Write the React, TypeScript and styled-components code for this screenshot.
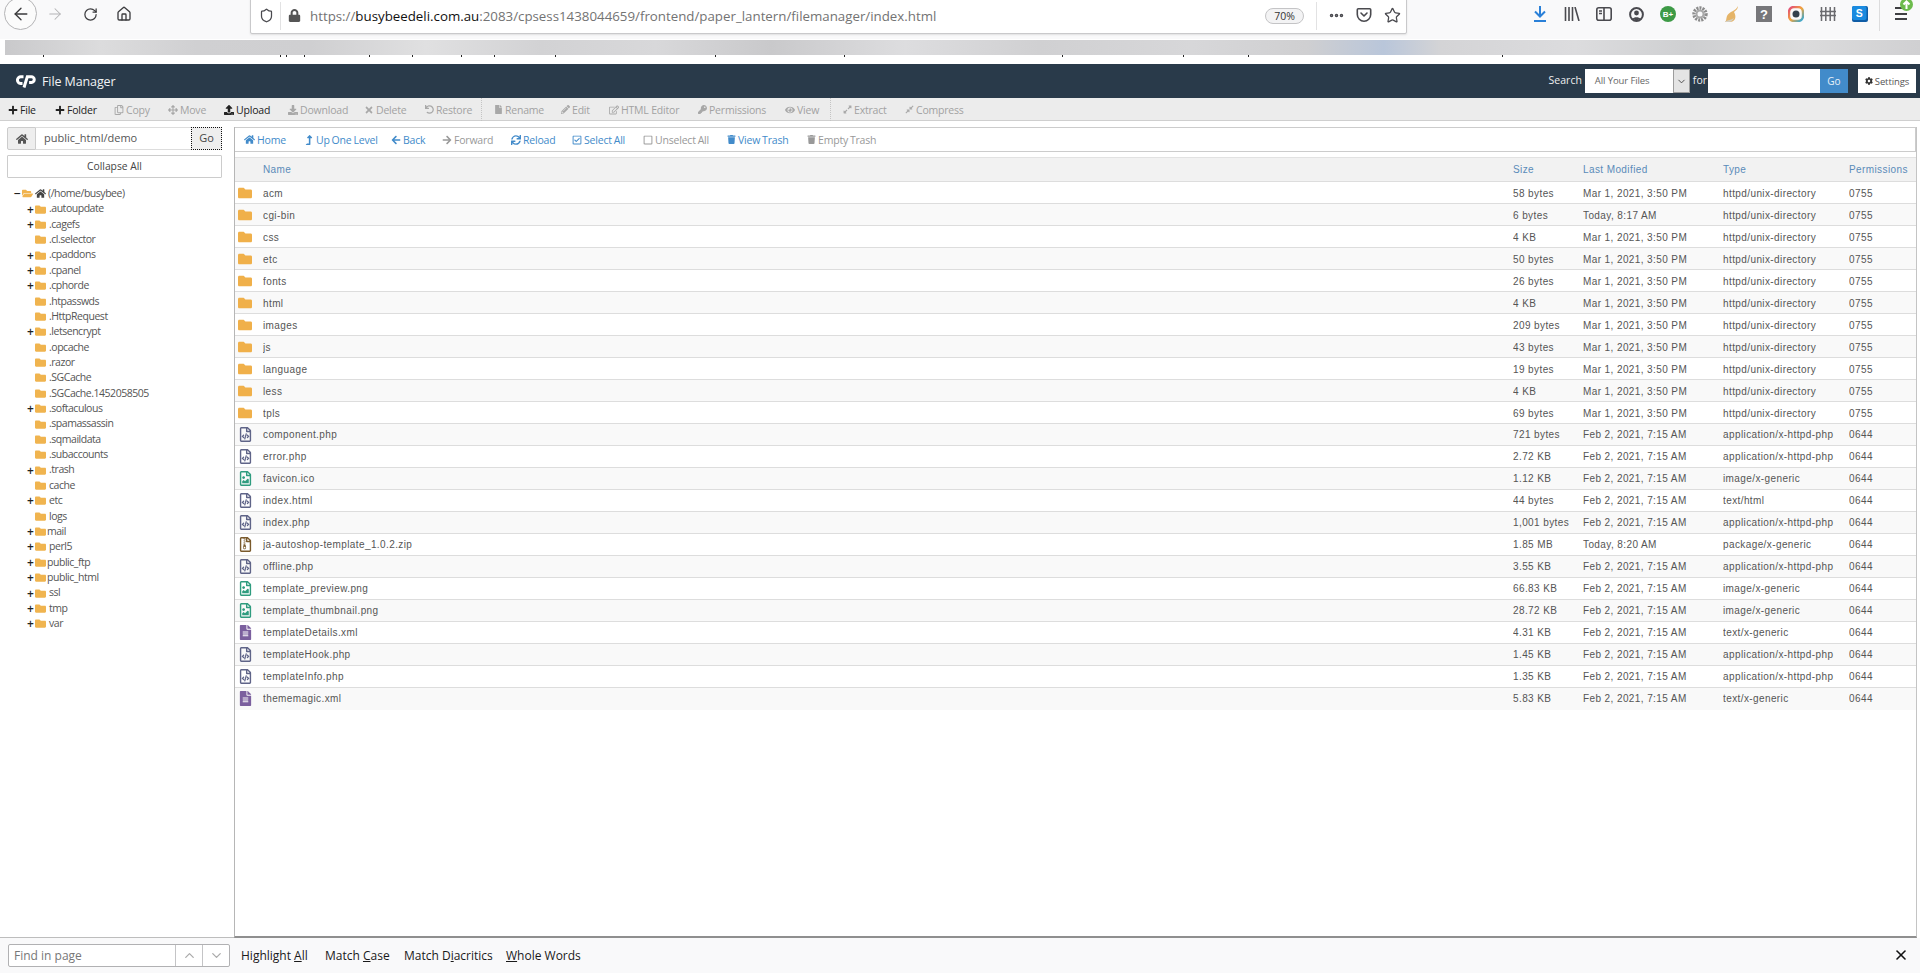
import React from "react";
import styled, { createGlobalStyle } from "styled-components";
import {
  FaPlus, FaRegCopy, FaArrowsAlt, FaUpload, FaDownload, FaTimes, FaUndo, FaFile, FaPencilAlt, FaRegEdit,
  FaKey, FaEye, FaExpandAlt, FaCompressAlt, FaHome, FaLevelUpAlt, FaArrowLeft, FaArrowRight, FaSync,
  FaRegCheckSquare, FaRegSquare, FaTrash, FaCog, FaFolder, FaFolderOpen, FaRegFileCode, FaRegFileImage,
  FaFileAlt, FaRegFileArchive, FaLock,
} from "react-icons/fa";
import { ArrowLeft, ArrowRight, RotateCw, Home, Shield, Star, ChevronUp, ChevronDown, X, Ellipsis } from "lucide-react";

const Global = createGlobalStyle`
  html, body { margin: 0; padding: 0; background: #fff; overflow: hidden; }
  * { box-sizing: border-box; }
`;

const Page = styled.div`
  width: 1920px; height: 973px; display: flex; flex-direction: column; overflow: hidden;
  font-family: "Open Sans", sans-serif; color: #333;
`;

const BrowserBar = styled.div`
  height: 39px; background: #f9f9fa; display: flex; align-items: flex-start; position: relative; flex: none;
`;
const BackCircle = styled.div`
  width: 33px; height: 33px; margin: -3px 0 0 4px; border: 1px solid #b4b4b6; border-radius: 50%;
  display: flex; align-items: center; justify-content: center; color: #3a3a3c; background: #fbfbfb; flex: none;
`;
const NavSlot = styled.div<{ $w: number; $c?: string }>`
  width: ${p => p.$w}px; height: 28px; display: flex; align-items: center; justify-content: center;
  color: ${p => p.$c || "#3d3d3f"}; flex: none;
`;
const UrlBox = styled.div`
  position: absolute; left: 250px; top: -1px; width: 1157px; height: 35px; background: #fff;
  border: 1px solid #c9c9cb; border-radius: 0 0 2px 2px; box-shadow: 0 1px 2px rgba(0,0,0,.1);
  display: flex; align-items: center; color: #555;
`;
const UrlText = styled.div`
  position: absolute; left: 59px; top: 6px; font-size: 13.3px; line-height: 20px; color: #737373; white-space: nowrap;
  b { font-weight: 400; color: #111; }
`;
const UrlSep = styled.div<{ $x: number }>`
  position: absolute; left: ${p => p.$x}px; top: 2px; height: 28px; width: 1px; background: #e2e2e3;
`;
const UrlIcon = styled.div<{ $x: number }>`
  position: absolute; left: ${p => p.$x}px; top: 5px; width: 20px; height: 20px; display: flex; align-items: center; justify-content: center; color: #4a4a4f;
`;
const ZoomPill = styled.div`
  position: absolute; left: 1014px; top: 8px; width: 39px; height: 16px; border: 1px solid #c4c4c6; border-radius: 8px;
  background: #f3f3f4; font-size: 10.5px; line-height: 14px; text-align: center; color: #333;
`;
const ToolIcons = styled.div`
  position: absolute; left: 1524px; top: 4px; display: flex; align-items: center; height: 20px;
`;
const ToolIcon = styled.div`
  width: 32px; height: 20px; display: flex; align-items: center; justify-content: center; color: #4a4a4f; flex: none;
`;
const ToolSep = styled.div`
  position: absolute; left: 1879px; top: 0; width: 1px; height: 31px; background: #dcdcdd;
`;
const MenuSlot = styled.div`
  position: absolute; left: 1895px; top: 7px; width: 12px; height: 13px; display: flex; flex-direction: column; justify-content: space-between;
`;
const MenuLine = styled.i`
  display: block; height: 2px; background: #3f3f42;
`;
const UpdateBadge = styled.div`
  position: absolute; left: 1900px; top: 0; width: 13px; height: 11px; overflow: hidden; display: flex; align-items: flex-end;
`;

const ticks = [43,280,286,304,369,412,461,494,555,715,844,1062,1183,1248,1502];
const BlurWrap = styled.div`
  height: 25px; flex: none; background: #fff; position: relative;
`;
const BlurStrip = styled.div`
  position: absolute; left: 5px; right: 0; top: 1px; height: 15px; filter: blur(.4px);
  background: linear-gradient(90deg, #c9c9cb 0%, #dcdcdd 5%, #d0d0d2 10%, #cfcfd1 16%, #e0e0e1 22%, #d2d2d4 28%, #d8d8da 34%, #c9c9cb 40%, #dddddf 47%, #d0d0d2 54%, #d7d7d9 62%, #cfcfd1 68%, #b9c6da 72%, #d4d4d6 75%, #dcdcde 82%, #cecfd1 88%, #dbdbdc 94%, #d0d0d2 100%);
`;
const Tick = styled.i`
  position: absolute; top: 16px; width: 1px; height: 2px; background: #222;
`;

const Header = styled.div`
  height: 34px; flex: none; background: #293a4a; display: flex; align-items: center; padding-left: 15px; position: relative; color: #fff;
`;
const Brand = styled.div`
  font-size: 12.5px; margin-left: 6px; color: #f1f3f5; letter-spacing: -.1px;
`;
const SearchForm = styled.div`
  margin-left: auto; display: flex; align-items: center; padding-right: 4px; height: 100%;
`;
const SearchLabel = styled.span<{ $l?: number; $r: number }>`
  font-size: 10.5px; color: #eee; margin: -2px ${p => p.$r}px 0 ${p => p.$l || 0}px;
`;
const FakeSelect = styled.div`
  width: 105px; height: 24px; background: #fff; color: #666; font-size: 9.5px; line-height: 24px; padding-left: 10px; position: relative; letter-spacing: -.1px;
`;
const SelectArrow = styled.div`
  position: absolute; right: 0; top: 0; width: 17px; height: 24px; background: #e4e4e4; border: 1px solid #9d9d9d; color: #444;
  display: flex; align-items: center; justify-content: center;
`;
const SearchInput = styled.div`
  width: 112px; height: 24px; background: #fff;
`;
const GoBlue = styled.div`
  width: 28px; height: 24px; background: #428bca; color: #e8f0f8; font-size: 10px; line-height: 24px; text-align: center;
`;
const SettingsBtn = styled.div`
  width: 58px; height: 24px; margin-left: 10px; background: #fff; color: #555; font-size: 9.5px; display: flex; align-items: center; justify-content: center; gap: 2px; letter-spacing: -.1px;
  svg { color: #333; }
`;

const ActionBar = styled.div`
  height: 23px; flex: none; background: #ececec; border-bottom: 1px solid #cfcfcf; display: flex; align-items: center; padding-left: 8px;
`;
const Action = styled.div<{ $w: number; $on?: boolean }>`
  width: ${p => p.$w}px; flex: none; display: flex; align-items: center; gap: 2px; font-size: 10.5px; line-height: 14px; padding-top: 1px; white-space: nowrap; letter-spacing: -.2px;
  color: ${p => (p.$on ? "#222" : "#a2a2a2")};
  svg { color: ${p => (p.$on ? "#222" : "#a8a8a8")}; flex: none; }
`;
const ActionSep = styled.div`
  width: 1px; height: 23px; flex: none; margin-right: 12px; margin-left: -1px;
  background-image: linear-gradient(#c4c4c4 50%, transparent 50%); background-size: 1px 2px;
`;

const Main = styled.div`
  flex: 1; display: flex; min-height: 0; padding-top: 6px;
`;
const Side = styled.div`
  width: 234px; flex: none; padding: 0 12px 0 7px; border-bottom: 1px solid #bdbdbd;
`;
const PathRow = styled.div`
  display: flex; height: 23px;
`;
const PathHome = styled.div`
  width: 29px; background: #eee; border: 1px solid #ccc; border-radius: 2px 0 0 2px; display: flex; align-items: center; justify-content: center; color: #555;
`;
const PathInput = styled.div`
  flex: 1; border-top: 1px solid #ddd; border-bottom: 1px solid #ddd; font-size: 11px; line-height: 20px; padding-left: 8px; color: #555;
`;
const PathGo = styled.div`
  width: 31px; background: #eee; border: 1px dotted #111; font-size: 11px; line-height: 20px; text-align: center; color: #444;
`;
const Collapse = styled.div`
  height: 23px; margin-top: 5px; border: 1px solid #ccc; border-radius: 1px; font-size: 10.3px; line-height: 20px; text-align: center; color: #444;
`;
const Tree = styled.div`
  margin-top: 8px; font-size: 10.5px; color: #555;
`;
const Node = styled.div<{ $root?: boolean }>`
  height: 15.36px; line-height: 15.36px; display: flex; align-items: center; white-space: nowrap; padding-left: ${p => (p.$root ? 6 : 19)}px; letter-spacing: -.47px;
`;
const Toggle = styled.span`
  width: 9px; flex: none; color: #222; font-size: 12px; line-height: 15px; font-weight: 600; text-align: center; letter-spacing: 0;
`;
const Folder = styled.span<{ $tight?: boolean }>`
  color: #f0b44f; flex: none; display: inline-flex; width: 11px; margin-right: ${p => (p.$tight ? 1 : 3)}px;
`;
const RootHome = styled.span`
  display: inline-flex; color: #444; margin: 0 2px 0 -1px;
`;

const Content = styled.div`
  flex: 1; min-width: 0; border-left: 1px solid #b6b6b6; border-right: 1px solid #c4c4c4; border-bottom: 2px solid #8f8f8f; margin-right: 3px; display: flex; flex-direction: column;
`;
const NavBar = styled.div`
  height: 25px; flex: none; border: 1px solid #ccc; border-left: 0; display: flex; align-items: center; padding-left: 9px;
`;
const NavItem = styled.div<{ $w: number; $off?: boolean }>`
  width: ${p => p.$w}px; flex: none; display: flex; align-items: center; gap: 2px; font-size: 10.5px; line-height: 14px; white-space: nowrap; letter-spacing: -.2px; word-spacing: -.6px;
  color: ${p => (p.$off ? "#999" : "#428bca")};
  svg { flex: none; }
`;
const Table = styled.table`
  margin-top: 5px; width: 100%; border-collapse: collapse; table-layout: fixed; font-family: "Liberation Sans", Arial, sans-serif; font-size: 10px; letter-spacing: .4px; color: #555;
`;
const Th = styled.th<{ $w?: number }>`
  ${p => (p.$w ? `width: ${p.$w}px;` : "")}
  height: 24px; padding: 0; background: #f2f2f2; text-align: left; font-weight: 400; color: #5a8bb9; border-bottom: 1px solid #ddd; border-top: 1px solid #e2e2e2;
`;
const Tr = styled.tr<{ $alt: boolean }>`
  background: ${p => (p.$alt ? "#f9f9f9" : "#fff")};
  &:last-child td { border-bottom: 0; }
`;
const Td = styled.td<{ $low?: boolean }>`
  height: 22px; padding: ${p => (p.$low ? "2px" : "0")} 0 0; border-bottom: 1px solid #ddd; white-space: nowrap; overflow: hidden;
`;
const IconCell = styled.span<{ $c: string }>`
  display: flex; padding-left: 3px; color: ${p => p.$c};
`;

const FindBar = styled.div`
  height: 35px; flex: none; background: #f9f9fa; display: flex; align-items: center; padding-left: 8px; position: relative; font-size: 12px; color: #1a1a1a;
`;
const FindBox = styled.div`
  width: 222px; height: 23px; background: #fff; border: 1px solid #b1b1b3; border-radius: 2px; display: flex; color: #777; font-size: 12px; line-height: 21px;
`;
const FindText = styled.div`
  flex: 1; padding-left: 5px;
`;
const FindBtn = styled.div`
  width: 27px; border-left: 1px solid #c4c4c6; display: flex; align-items: center; justify-content: center; color: #aaa;
`;
const FindOpt = styled.span<{ $w: number; $l?: number }>`
  width: ${p => p.$w}px; margin-left: ${p => p.$l || 0}px; flex: none; white-space: nowrap; u { text-underline-offset: 1px; }
`;
const FindClose = styled.div`
  position: absolute; left: 1893px; top: 9px; color: #111; display: flex;
`;

const folderNames = ["acm","cgi-bin","css","etc","fonts","html","images","js","language","less","tpls"];
const folderMeta: [string,string][] = [["58 bytes","Mar 1, 2021, 3:50 PM"],["6 bytes","Today, 8:17 AM"],["4 KB","Mar 1, 2021, 3:50 PM"],["50 bytes","Mar 1, 2021, 3:50 PM"],["26 bytes","Mar 1, 2021, 3:50 PM"],["4 KB","Mar 1, 2021, 3:50 PM"],["209 bytes","Mar 1, 2021, 3:50 PM"],["43 bytes","Mar 1, 2021, 3:50 PM"],["19 bytes","Mar 1, 2021, 3:50 PM"],["4 KB","Mar 1, 2021, 3:50 PM"],["69 bytes","Mar 1, 2021, 3:50 PM"]];
type Kind = "folder"|"code"|"image"|"zip"|"text";
type Row = { n: string; s: string; d: string; t: string; p: string; k: Kind };
const F = "Feb 2, 2021, 7:15 AM";
const PHP = "application/x-httpd-php";
const rows: Row[] = [
  ...folderNames.map((n,i): Row => ({ n, s: folderMeta[i][0], d: folderMeta[i][1], t: "httpd/unix-directory", p: "0755", k: "folder" })),
  { n:"component.php", s:"721 bytes", d:F, t:PHP, p:"0644", k:"code" },
  { n:"error.php", s:"2.72 KB", d:F, t:PHP, p:"0644", k:"code" },
  { n:"favicon.ico", s:"1.12 KB", d:F, t:"image/x-generic", p:"0644", k:"image" },
  { n:"index.html", s:"44 bytes", d:F, t:"text/html", p:"0644", k:"code" },
  { n:"index.php", s:"1,001 bytes", d:F, t:PHP, p:"0644", k:"code" },
  { n:"ja-autoshop-template_1.0.2.zip", s:"1.85 MB", d:"Today, 8:20 AM", t:"package/x-generic", p:"0644", k:"zip" },
  { n:"offline.php", s:"3.55 KB", d:F, t:PHP, p:"0644", k:"code" },
  { n:"template_preview.png", s:"66.83 KB", d:F, t:"image/x-generic", p:"0644", k:"image" },
  { n:"template_thumbnail.png", s:"28.72 KB", d:F, t:"image/x-generic", p:"0644", k:"image" },
  { n:"templateDetails.xml", s:"4.31 KB", d:F, t:"text/x-generic", p:"0644", k:"text" },
  { n:"templateHook.php", s:"1.45 KB", d:F, t:PHP, p:"0644", k:"code" },
  { n:"templateInfo.php", s:"1.35 KB", d:F, t:PHP, p:"0644", k:"code" },
  { n:"thememagic.xml", s:"5.83 KB", d:F, t:"text/x-generic", p:"0644", k:"text" },
];
const kindIcon = (k: Kind) => {
  switch (k) {
    case "folder": return <IconCell $c="#f0b04a"><FaFolder size={14} /></IconCell>;
    case "code": return <IconCell $c="#5f6488"><FaRegFileCode size={15} /></IconCell>;
    case "image": return <IconCell $c="#2f9c7f"><FaRegFileImage size={15} /></IconCell>;
    case "zip": return <IconCell $c="#7a5a2c"><FaRegFileArchive size={15} /></IconCell>;
    default: return <IconCell $c="#7b5f9e"><FaFileAlt size={15} /></IconCell>;
  }
};

const tree: [string, boolean][] = [[".autoupdate",true],[".cagefs",true],[".cl.selector",false],[".cpaddons",true],[".cpanel",true],[".cphorde",true],[".htpasswds",false],[".HttpRequest",false],[".letsencrypt",true],[".opcache",false],[".razor",false],[".SGCache",false],[".SGCache.1452058505",false],[".softaculous",true],[".spamassassin",false],[".sqmaildata",false],[".subaccounts",false],[".trash",true],["cache",false],["etc",true],["logs",false],["mail",true],["perl5",true],["public_ftp",true],["public_html",true],["ssl",true],["tmp",true],["var",true]];
const tight = new Set(["mail","public_ftp","public_html"]);

const Logo = () => (
  <svg width="21" height="14" viewBox="0 0 21 14" fill="none" stroke="#fff" strokeWidth="3">
    <path d="M8.500 2.800H6a3.300 3.300 0 0 0-.5 6.600h2" />
    <path d="M9 13.500 12.300 2.800h4a2.700 2.700 0 0 1 .2 5.700h-2.400" />
  </svg>
);

const actions: [React.ReactNode, string, number, boolean][] = [
  [<FaPlus size={10} />, "File", 47, true],
  [<FaPlus size={10} />, "Folder", 59, true],
  [<FaRegCopy size={10} />, "Copy", 54, false],
  [<FaArrowsAlt size={10} />, "Move", 56, false],
  [<FaUpload size={10} />, "Upload", 64, true],
  [<FaDownload size={10} />, "Download", 76, false],
  [<FaTimes size={10} />, "Delete", 61, false],
  [<FaUndo size={9} />, "Restore", 57, false],
];
const actions2: [React.ReactNode, string, number, boolean][] = [
  [<FaFile size={9} />, "Rename", 67, false],
  [<FaPencilAlt size={9} />, "Edit", 48, false],
  [<FaRegEdit size={10} />, "HTML Editor", 89, false],
  [<FaKey size={9} />, "Permissions", 87, false],
  [<FaEye size={10} />, "View", 46, false],
];
const actions3: [React.ReactNode, string, number, boolean][] = [
  [<FaExpandAlt size={9} />, "Extract", 62, false],
  [<FaCompressAlt size={9} />, "Compress", 70, false],
];
const navs: [React.ReactNode, string, number, boolean?][] = [
  [<FaHome size={11} />, "Home", 60],
  [<FaLevelUpAlt size={10} />, "Up One Level", 87],
  [<FaArrowLeft size={10} />, "Back", 51],
  [<FaArrowRight size={10} />, "Forward", 69, true],
  [<FaSync size={10} />, "Reload", 61],
  [<FaRegCheckSquare size={10} />, "Select All", 71],
  [<FaRegSquare size={10} />, "Unselect All", 84, true],
  [<FaTrash size={9} />, "View Trash", 80],
  [<FaTrash size={9} />, "Empty Trash", 80, true],
];

const Act = ({ a }: { a: [React.ReactNode, string, number, boolean] }) => (
  <Action $w={a[2]} $on={a[3]}>{a[0]}{a[1]}</Action>
);

export default function App() {
  return (
    <Page>
      <Global />
      <BrowserBar>
        <BackCircle><ArrowLeft size={20} strokeWidth={1.6} /></BackCircle>
        <NavSlot $w={35} $c="#b3b3b5"><ArrowRight size={18} strokeWidth={1.4} /></NavSlot>
        <NavSlot $w={36}><RotateCw size={15} strokeWidth={2} /></NavSlot>
        <NavSlot $w={32}><Home size={16} strokeWidth={2} /></NavSlot>
        <UrlBox>
          <UrlIcon $x={5}><Shield size={15} strokeWidth={2} /></UrlIcon>
          <UrlSep $x={29} />
          <UrlIcon $x={33}><FaLock size={13} color="#555" /></UrlIcon>
          <UrlText>https://<b>busybeedeli.com.au</b>:2083/cpsess1438044659/frontend/paper_lantern/filemanager/index.html</UrlText>
          <ZoomPill>70%</ZoomPill>
          <UrlSep $x={1065} />
          <UrlIcon $x={1075}><Ellipsis size={17} strokeWidth={3} /></UrlIcon>
          <UrlIcon $x={1103}>
            <svg width="16" height="16" viewBox="0 0 16 16" fill="none" stroke="#4a4a4f" strokeWidth="1.6"><path d="M2.300 1.800h11.400c.6 0 1 .4 1 1v4.700a6.700 6.700 0 0 1-13.400 0V2.800c0-.6.400-1 1-1z" /><path d="m5 6 3 3 3-3" strokeLinecap="round" strokeLinejoin="round" /></svg>
          </UrlIcon>
          <UrlIcon $x={1131}><Star size={17} strokeWidth={1.8} /></UrlIcon>
        </UrlBox>
        <ToolIcons>
          <ToolIcon>
            <svg width="14" height="16" viewBox="0 0 14 16" fill="none" stroke="#2a80d8" strokeWidth="2"><path d="M7 0v10M2 5.500l5 5 5-5M1 15h12" /></svg>
          </ToolIcon>
          <ToolIcon>
            <svg width="16" height="14" viewBox="0 0 16 14" fill="none" stroke="#4a4a4f" strokeWidth="1.600"><path d="M1.500 0v14M5 0v14M8.500 0v14M11 0l4 14" /></svg>
          </ToolIcon>
          <ToolIcon>
            <svg width="16" height="14" viewBox="0 0 16 14" fill="none" stroke="#4a4a4f" strokeWidth="1.600"><rect x=".8" y=".8" width="14.400" height="12.400" rx="2" /><path d="M8 1v12M3 4h3M3 6.500h3" /></svg>
          </ToolIcon>
          <ToolIcon>
            <svg width="15" height="15" viewBox="0 0 15 15" fill="none"><circle cx="7.500" cy="7.500" r="6.400" stroke="#4a4a4f" strokeWidth="2" /><circle cx="7.500" cy="6" r="2.400" fill="#4a4a4f" /><path d="M3.500 12c1-2.300 7-2.300 8 0l-4 1.500z" fill="#4a4a4f" /></svg>
          </ToolIcon>
          <ToolIcon>
            <svg width="16" height="16" viewBox="0 0 16 16"><circle cx="8" cy="8" r="8" fill="#3d9a46" /><text x="8" y="11" textAnchor="middle" fontSize="8" fontWeight="700" fill="#fff" fontFamily="Liberation Sans">B+</text></svg>
          </ToolIcon>
          <ToolIcon>
            <svg width="16" height="16" viewBox="0 0 16 16"><circle cx="8" cy="8" r="6" fill="none" stroke="#8c8c8c" strokeWidth="3.400" strokeDasharray="2 1" /><circle cx="8" cy="8" r="3.500" fill="none" stroke="#a9a9a9" strokeWidth="2" /></svg>
          </ToolIcon>
          <ToolIcon>
            <svg width="16" height="17" viewBox="0 0 16 17"><path d="M14 0c0 3-2 4-4 6 1 2 2 4 1 7-1 2-3 3-5 3H1c1.500-1 1-3 2-6 1-2 3-4 6-5 2-1 4-3 5-5z" fill="#e5b468" /><path d="M2 15c2-1 5-1 8-3-1 2-3 4-5 4H1z" fill="#d4d0c4" /></svg>
          </ToolIcon>
          <ToolIcon>
            <svg width="16" height="16" viewBox="0 0 16 16"><rect width="16" height="16" fill="#77777a" /><text x="8" y="13" textAnchor="middle" fontSize="13" fontWeight="700" fill="#fff" fontFamily="Liberation Sans">?</text></svg>
          </ToolIcon>
          <ToolIcon>
            <svg width="16" height="16" viewBox="0 0 16 16" fill="none"><rect x="1" y="1" width="14" height="14" rx="5" stroke="url(#g)" strokeWidth="2.400" /><circle cx="8" cy="8" r="3.500" fill="#33404d" /><defs><linearGradient id="g" x1="0" y1="0" x2="1" y2="1"><stop stopColor="#e1467c" /><stop offset=".5" stopColor="#f3a43b" /><stop offset="1" stopColor="#22a7e0" /></linearGradient></defs></svg>
          </ToolIcon>
          <ToolIcon>
            <svg width="16" height="14" viewBox="0 0 16 14" fill="none" stroke="#6a6a6e" strokeWidth="1.500"><path d="M1.500 0v14M5.800 0v14M10.200 0v14M14.500 0v14M0 4.500h16M0 8.500h16" /></svg>
          </ToolIcon>
          <ToolIcon>
            <svg width="16" height="16" viewBox="0 0 16 16"><rect width="16" height="16" rx="2" fill="#0f5da6" /><rect width="14.500" height="14" rx="2" fill="#1a8be0" /><text x="7.200" y="11" textAnchor="middle" fontSize="10.500" fontWeight="700" fill="#fff" fontFamily="Liberation Sans">S</text></svg>
          </ToolIcon>
        </ToolIcons>
        <ToolSep />
        <MenuSlot><MenuLine /><MenuLine /><MenuLine /></MenuSlot>
        <UpdateBadge>
          <svg width="13" height="13" viewBox="0 0 13 13" style={{ flex: "none" }}><circle cx="6.500" cy="6.500" r="6.500" fill="#6cbb4c" /><path d="M6.500 11V4M3.500 6.500l3-3 3 3" fill="none" stroke="#fff" strokeWidth="2" /></svg>
        </UpdateBadge>
      </BrowserBar>
      <BlurWrap>
        <BlurStrip />
        {ticks.map(x => <Tick key={x} style={{ left: x }} />)}
      </BlurWrap>
      <Header>
        <Logo />
        <Brand>File Manager</Brand>
        <SearchForm>
          <SearchLabel $r={3}>Search</SearchLabel>
          <FakeSelect>All Your Files<SelectArrow><ChevronDown size={11} strokeWidth={2} /></SelectArrow></FakeSelect>
          <SearchLabel $l={3} $r={1}>for</SearchLabel>
          <SearchInput />
          <GoBlue>Go</GoBlue>
          <SettingsBtn><FaCog size={8} />Settings</SettingsBtn>
        </SearchForm>
      </Header>
      <ActionBar>
        {actions.map(a => <Act key={a[1]} a={a} />)}
        <ActionSep />
        {actions2.map(a => <Act key={a[1]} a={a} />)}
        <ActionSep />
        {actions3.map(a => <Act key={a[1]} a={a} />)}
      </ActionBar>
      <Main>
        <Side>
          <PathRow>
            <PathHome><FaHome size={12} /></PathHome>
            <PathInput>public_html/demo</PathInput>
            <PathGo>Go</PathGo>
          </PathRow>
          <Collapse>Collapse All</Collapse>
          <Tree>
            <Node $root>
              <Toggle>−</Toggle>
              <Folder><FaFolderOpen size={11} /></Folder>
              <RootHome><FaHome size={11} /></RootHome>
              (/home/busybee)
            </Node>
            {tree.map(([n, plus]) => (
              <Node key={n}>
                <Toggle>{plus ? "+" : ""}</Toggle>
                <Folder $tight={tight.has(n)}><FaFolder size={11} /></Folder>
                {n}
              </Node>
            ))}
          </Tree>
        </Side>
        <Content>
          <NavBar>
            {navs.map(n => <NavItem key={n[1]} $w={n[2]} $off={n[3]}>{n[0]}{n[1]}</NavItem>)}
          </NavBar>
          <Table>
            <thead>
              <tr>
                <Th $w={28} />
                <Th>Name</Th>
                <Th $w={70}>Size</Th>
                <Th $w={140}>Last Modified</Th>
                <Th $w={126}>Type</Th>
                <Th $w={67}>Permissions</Th>
              </tr>
            </thead>
            <tbody>
              {rows.map((r, i) => {
                const low = r.k === "folder";
                return (
                  <Tr key={r.n} $alt={i % 2 === 1}>
                    <Td>{kindIcon(r.k)}</Td>
                    <Td $low={low}>{r.n}</Td>
                    <Td $low={low}>{r.s}</Td>
                    <Td $low={low}>{r.d}</Td>
                    <Td $low={low}>{r.t}</Td>
                    <Td $low={low}>{r.p}</Td>
                  </Tr>
                );
              })}
            </tbody>
          </Table>
        </Content>
      </Main>
      <FindBar>
        <FindBox>
          <FindText>Find in page</FindText>
          <FindBtn><ChevronUp size={15} /></FindBtn>
          <FindBtn><ChevronDown size={15} /></FindBtn>
        </FindBox>
        <FindOpt $w={84} $l={11}>Highlight <u>A</u>ll</FindOpt>
        <FindOpt $w={79}>Match <u>C</u>ase</FindOpt>
        <FindOpt $w={102}>Match D<u>i</u>acritics</FindOpt>
        <FindOpt $w={90}><u>W</u>hole Words</FindOpt>
        <FindClose><X size={16} strokeWidth={2.4} /></FindClose>
      </FindBar>
    </Page>
  );
}
